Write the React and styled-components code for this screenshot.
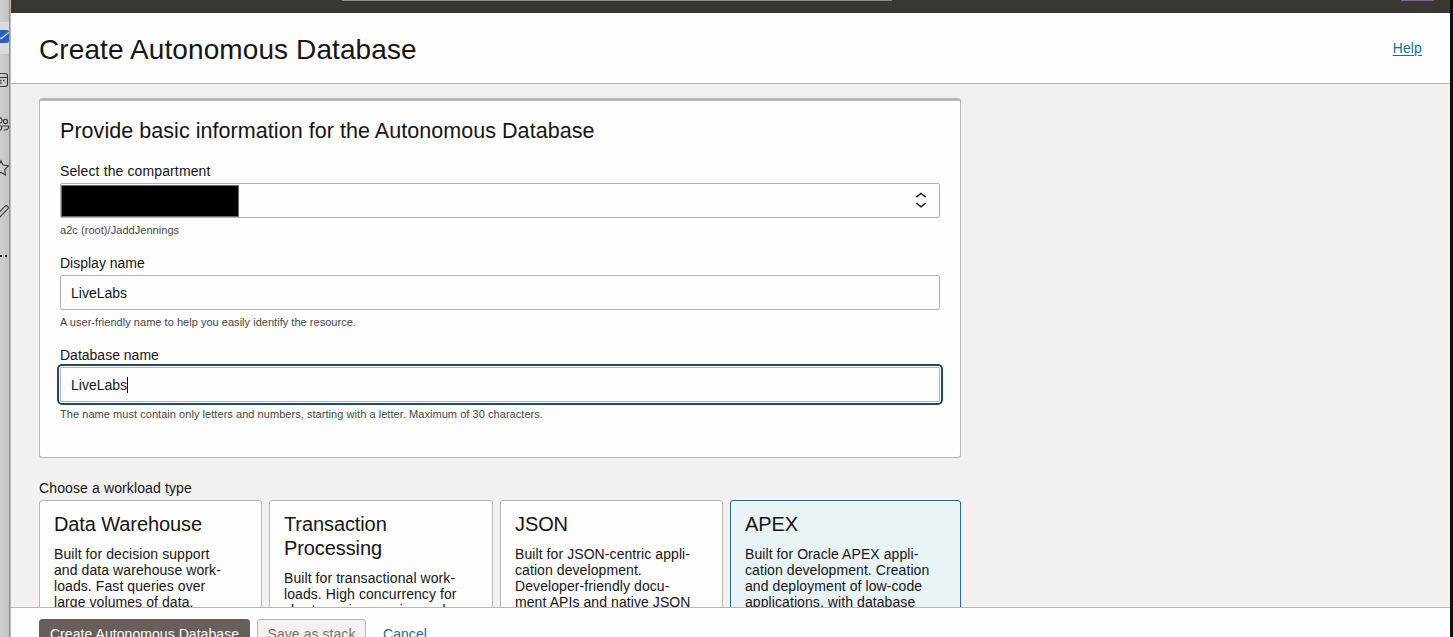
import React from 'react';
import styled, { createGlobalStyle } from 'styled-components';

const GlobalStyle = createGlobalStyle`
  * { box-sizing: border-box; }
  body {
    margin: 0;
    overflow: hidden;
    color: #161513;
    font-family: "Liberation Sans", Arial, sans-serif;
    font-size: 14px;
  }
  h1, h2, h3, p { margin: 0; font-weight: 400; }
`;

const Window = styled.div`
  display: flex;
  width: 1453px;
  height: 637px;
  overflow: hidden;
  background: #0b1012;
`;

const Rail = styled.nav`
  flex: none;
  display: flex;
  flex-direction: column;
  width: 11px;
  padding-top: 14px;
  background: linear-gradient(to right, #cfcfcf 0, #c2c2c2 9px, #919191 9px, #919191 10px, #b9b8b7 10px);
`;

const RailItem = styled.span`
  display: block;
  height: 44px;
  width: 9px;
  background: ${(p) => (p.$active ? 'linear-gradient(transparent 8px, #dadada 8px, #dadada 40px, transparent 40px)' : 'none')};

  svg {
    display: block;
    fill: none;
    stroke: #3c3c3c;
    stroke-width: 1.1;
    overflow: hidden;
  }
`;

const Page = styled.div`
  display: flex;
  flex-direction: column;
  width: 1439px;
  background: #f2f1ef;
`;

const ConsoleBar = styled.div`
  flex: none;
  display: flex;
  justify-content: space-between;
  height: 13px;
  padding: 0 16px 0 331px;
  background: #3a3632;
`;

const SearchEdge = styled.div`
  width: 550px;
  height: 1px;
  background: #8d8b87;
`;

const RegionEdge = styled.div`
  width: 33px;
  height: 1px;
  background: #7d6390;
`;

const Header = styled.header`
  flex: none;
  display: flex;
  align-items: center;
  justify-content: space-between;
  height: 71px;
  padding: 0 28px;
  background: #fdfdfd;
  border-bottom: 1px solid #bcb6b1;
`;

const Title = styled.h1`
  font-size: 28px;
  letter-spacing: 0.1px;
  line-height: 36px;
  padding-top: 4px;
`;

const HelpLink = styled.a`
  color: #226b95;
  font-size: 14px;
  letter-spacing: 0.01em;
  text-decoration: underline;
  text-underline-offset: 2px;
`;

const Content = styled.main`
  flex: none;
  height: 523px;
  padding: 14px 28px 0;
  overflow: hidden;
`;

const Panel = styled.section`
  width: 922px;
  height: 360px;
  padding: 15px 20px 0;
  background: #fdfdfd;
  border: 1px solid #bcb6b1;
  border-top-width: 3px;
  border-radius: 3px;
`;

const PanelTitle = styled.h2`
  font-size: 21.5px;
  letter-spacing: 0.05px;
  line-height: 30px;
  margin-bottom: 15px;
`;

const Field = styled.div`
  margin-bottom: 15px;
`;

const Label = styled.label`
  display: block;
  font-size: 14px;
  letter-spacing: ${(p) => (p.$tight ? '0' : '0.12px')};
  line-height: 20px;
  margin-bottom: 2px;
`;

const Control = styled.div`
  display: flex;
  align-items: center;
  height: 35px;
  padding-left: ${(p) => (p.$select ? '0' : '10px')};
  padding-right: 12px;
  border: 1px solid #b5b1ad;
  border-radius: 2px;
  outline: ${(p) => (p.$focused ? '2px solid #204a63' : 'none')};
  outline-offset: 1px;
`;

const Redaction = styled.div`
  width: 178px;
  height: 32px;
  margin-top: 1px;
  margin-right: auto;
  background: #000;
  border: 1px solid #6b6b6b;
`;

const Chevrons = styled.svg`
  margin-bottom: 2px;
  fill: none;
  stroke: #161513;
  stroke-width: 1.5;
`;

const Caret = styled.span`
  width: 1px;
  height: 16px;
  background: #000;
`;

const Hint = styled.p`
  margin-top: 4px;
  font-size: 11px;
  letter-spacing: ${(p) => (p.$tight ? '0.03px' : '0.05px')};
  line-height: 16px;
  color: #484643;
`;

const WorkloadLabel = styled(Label)`
  margin-top: 20px;
`;

const Cards = styled.div`
  display: grid;
  grid-template-columns: 223px 224px 223px 1fr;
  column-gap: 7px;
  width: 922px;
`;

const Card = styled.article`
  height: 160px;
  padding: 11px 14px;
  background: ${(p) => (p.$selected ? '#e9f2f5' : '#fdfdfd')};
  border: 1px solid ${(p) => (p.$selected ? '#226b95' : '#bcb6b1')};
  border-radius: 3px;
`;

const CardTitle = styled.h3`
  font-size: 20px;
  letter-spacing: -0.1px;
  line-height: 24px;
  white-space: pre-line;
`;

const CardText = styled.p`
  margin-top: 10px;
  font-size: 14px;
  letter-spacing: 0.08px;
  line-height: 16px;
  white-space: pre;
`;

const Footer = styled.footer`
  flex: none;
  display: flex;
  align-items: flex-start;
  height: 60px;
  padding: 11px 28px;
  background: #fdfdfd;
  border-top: 1px solid #bcb6b1;
`;

const Button = styled.button`
  height: 32px;
  padding: 0 0 2px;
  width: ${(p) => p.$width}px;
  margin-right: 7px;
  font: inherit;
  letter-spacing: 0.06px;
  line-height: 28px;
  border-radius: 3px;
  color: ${(p) => (p.$primary ? '#fff' : '#75716d')};
  background: ${(p) => (p.$primary ? '#665f5b' : '#f3f2f0')};
  border: 1px solid ${(p) => (p.$primary ? '#665f5b' : '#bcb6b1')};
`;

const CancelLink = styled.a`
  margin-left: 10px;
  line-height: 30px;
  letter-spacing: 0.06px;
  color: #226b95;
`;

const railIcons = [
  <>
    <rect x="-8" y="16" width="17" height="13" rx="2" fill="#2b62b8" stroke="none" />
    <path d="M-4 22 L1 24.5 L9 18.5" stroke="#d5e2f3" />
  </>,
  <>
    <rect x="-6" y="15.5" width="13.5" height="13" rx="2.2" />
    <path d="M-6 19.5H7.5" />
    <path d="M0 22.5h1.5M3 22.5h1.5M0 25h1.5" strokeWidth="1.5" />
  </>,
  <>
    <circle cx="5.5" cy="19.5" r="2.1" />
    <circle cx="-0.5" cy="18.5" r="2.6" />
    <path d="M2.5 24H8.5C9 27 6.5 28.5 3.8 27.7M-5 24H1.5C2.5 27 1 28.5-2 28.5" />
  </>,
  <path d="M1 14.8L3 19L8.4 19.8L4.7 23.5L5.5 29L1 26.4L-3.5 29L-2.7 23.5L-6.5 19.8L-1 19Z" />,
  <path d="M-5 27L5 16.2C6.5 14.7 9.4 17 7.8 18.8L-3 30" />,
  <path d="M0 22h2M5 22h2" stroke="#222" strokeWidth="2" />,
];

const workloads = [
  {
    title: 'Data Warehouse',
    text: 'Built for decision support\nand data warehouse work-\nloads. Fast queries over\nlarge volumes of data.',
  },
  {
    title: 'Transaction\nProcessing',
    text: 'Built for transactional work-\nloads. High concurrency for\nshort-running queries and',
  },
  {
    title: 'JSON',
    text: 'Built for JSON-centric appli-\ncation development.\nDeveloper-friendly docu-\nment APIs and native JSON',
  },
  {
    title: 'APEX',
    selected: true,
    text: 'Built for Oracle APEX appli-\ncation development. Creation\nand deployment of low-code\napplications, with database',
  },
];

export default function App() {
  return (
    <>
      <GlobalStyle />
      <Window>
        <Rail>
          {railIcons.map((icon, i) => (
            <RailItem key={i} $active={i === 0}>
              <svg width="9" height="44">{icon}</svg>
            </RailItem>
          ))}
        </Rail>
        <Page>
          <ConsoleBar>
            <SearchEdge />
            <RegionEdge />
          </ConsoleBar>
          <Header>
            <Title>Create Autonomous Database</Title>
            <HelpLink>Help</HelpLink>
          </Header>
          <Content>
            <Panel>
              <PanelTitle>Provide basic information for the Autonomous Database</PanelTitle>
              <Field>
                <Label>Select the compartment</Label>
                <Control $select>
                  <Redaction />
                  <Chevrons width="12" height="18" viewBox="0 0 12 18">
                    <path d="M1.3 6.2L6 2.4L10.7 6.2M1.3 12L6 15.8L10.7 12" />
                  </Chevrons>
                </Control>
                <Hint>a2c (root)/JaddJennings</Hint>
              </Field>
              <Field>
                <Label $tight>Display name</Label>
                <Control>LiveLabs</Control>
                <Hint $tight>A user-friendly name to help you easily identify the resource.</Hint>
              </Field>
              <Field>
                <Label $tight>Database name</Label>
                <Control $focused>
                  LiveLabs
                  <Caret />
                </Control>
                <Hint>
                  The name must contain only letters and numbers, starting with a letter. Maximum of 30 characters.
                </Hint>
              </Field>
            </Panel>
            <WorkloadLabel>Choose a workload type</WorkloadLabel>
            <Cards>
              {workloads.map((w) => (
                <Card key={w.title} $selected={w.selected}>
                  <CardTitle>{w.title}</CardTitle>
                  <CardText>{w.text}</CardText>
                </Card>
              ))}
            </Cards>
          </Content>
          <Footer>
            <Button $primary $width={211}>Create Autonomous Database</Button>
            <Button $width={109}>Save as stack</Button>
            <CancelLink>Cancel</CancelLink>
          </Footer>
        </Page>
      </Window>
    </>
  );
}
